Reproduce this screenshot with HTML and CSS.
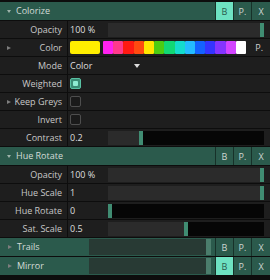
FILE: index.html
```html
<!DOCTYPE html>
<html>
<head>
<meta charset="utf-8">
<link rel="stylesheet" href="styles.css">
</head>
<body>
<div class="panel">
  <div class="hdr">
    <span class="tri-down"></span><span class="title">Colorize</span>
    <div class="btns"><span class="btn on">B</span><span class="btn">P.</span><span class="btn">X</span></div>
  </div>
  <div class="row">
    <div class="lbl">Opacity</div>
    <div class="val"><span class="num">100 %</span>
      <div class="slider"><div class="fill" style="flex-basis:100%"></div><div class="knob"></div><div class="rest"></div></div></div>
  </div>
  <div class="row">
    <div class="lbl"><span class="tri-right"></span>Color</div>
    <div class="val">
      <span class="swatch"></span>
      <div class="palette">
        <span style="background:#ff22f0"></span><span style="background:#ff3a8c"></span><span style="background:#ff1a12"></span><span style="background:#ff4a10"></span><span style="background:#ffe600"></span><span style="background:#4ccc12"></span><span style="background:#12d874"></span><span style="background:#14dccc"></span><span style="background:#24bcff"></span><span style="background:#1462ff"></span><span style="background:#3434ff"></span><span style="background:#8434ff"></span><span style="background:#d244ff"></span><span style="background:#ffffff"></span>
      </div>
      <span class="pbtn">P.</span>
    </div>
  </div>
  <div class="row">
    <div class="lbl">Mode</div>
    <div class="val"><div class="dropdown"><span>Color</span><span class="tri-dd"></span></div></div>
  </div>
  <div class="row">
    <div class="lbl">Weighted</div>
    <div class="val"><span class="check on"><span class="dot"></span></span></div>
  </div>
  <div class="row">
    <div class="lbl"><span class="tri-right"></span>Keep Greys</div>
    <div class="val"><span class="check"></span></div>
  </div>
  <div class="row">
    <div class="lbl">Invert</div>
    <div class="val"><span class="check"></span></div>
  </div>
  <div class="row">
    <div class="lbl">Contrast</div>
    <div class="val"><span class="num">0.2</span>
      <div class="slider"><div class="fill" style="flex-basis:20%"></div><div class="knob"></div><div class="rest"></div></div></div>
  </div>
  <div class="hdr">
    <span class="tri-down"></span><span class="title">Hue Rotate</span>
    <div class="btns"><span class="btn">B</span><span class="btn">P.</span><span class="btn">X</span></div>
  </div>
  <div class="row">
    <div class="lbl">Opacity</div>
    <div class="val"><span class="num">100 %</span>
      <div class="slider"><div class="fill" style="flex-basis:100%"></div><div class="knob"></div><div class="rest"></div></div></div>
  </div>
  <div class="row">
    <div class="lbl">Hue Scale</div>
    <div class="val"><span class="num">1</span>
      <div class="slider"><div class="fill" style="flex-basis:100%"></div><div class="knob"></div><div class="rest"></div></div></div>
  </div>
  <div class="row">
    <div class="lbl">Hue Rotate</div>
    <div class="val"><span class="num">0</span>
      <div class="slider"><div class="fill" style="flex-basis:0%"></div><div class="knob"></div><div class="rest"></div></div></div>
  </div>
  <div class="row">
    <div class="lbl">Sat. Scale</div>
    <div class="val"><span class="num">0.5</span>
      <div class="slider"><div class="fill" style="flex-basis:49%"></div><div class="knob"></div><div class="rest"></div></div></div>
  </div>
  <div class="hdr">
    <span class="tri-right hdr-tri"></span><span class="title short">Trails</span>
    <div class="hslider"><div class="hfill"></div><div class="hknob"></div></div>
    <div class="btns"><span class="btn">B</span><span class="btn">P.</span><span class="btn">X</span></div>
  </div>
  <div class="hdr">
    <span class="tri-right hdr-tri"></span><span class="title short">Mirror</span>
    <div class="hslider"><div class="hfill"></div><div class="hknob"></div></div>
    <div class="btns"><span class="btn on">B</span><span class="btn">P.</span><span class="btn">X</span></div>
  </div>
</div>
</body>
</html>
```

FILE: styles.css
```css
html, body {
  margin: 0;
  padding: 0;
  background: #171717;
}
body {
  font-family: "Open Sans", "Noto Sans", sans-serif;
  font-size: 9px;
  color: #c8c8c8;
}
.panel {
  width: 270px;
  padding-top: 2px;
  display: flex;
  flex-direction: column;
  gap: 1px;
  background: #0d0d0d;
  padding-bottom: 5px;
}
.hdr {
  height: 18px;
  display: flex;
  align-items: center;
  background: #2b5a4c;
  color: #d4dcd8;
}
.tri-down {
  width: 0;
  height: 0;
  margin-left: 7px;
  border-left: 2.5px solid transparent;
  border-right: 2.5px solid transparent;
  border-top: 3px solid #9fb3ab;
}
.title {
  margin-left: 5px;
  line-height: 18px;
}
.title.short {
  width: 70px;
}
.hdr-tri {
  margin-left: 8px;
  border-left-color: #8fa59c;
}
.btns {
  margin-left: auto;
  display: flex;
  align-self: stretch;
  gap: 1px;
  padding-left: 1px;
  background: #173129;
}
.btn {
  width: 17px;
  display: flex;
  align-items: center;
  justify-content: center;
  background: #2b5a4c;
  color: #cfd6d3;
  font-size: 9px;
}
.btn:last-child {
  width: 18px;
}
.btn.on {
  background: #6ee2c2;
  color: #2a5a4c;
}
.hslider {
  width: 122px;
  height: 16px;
  display: flex;
  margin-left: 2px;
  margin-right: 3px;
}
.hfill {
  flex: 1;
  background: #28392f;
  background: #283a34;
}
.hknob {
  width: 5px;
  background: #4b7d6c;
}
.row {
  height: 17px;
  display: flex;
  background: #1e1e1e;
}
.lbl {
  width: 67px;
  border-right: 1px solid #0d0d0d;
  display: flex;
  align-items: center;
  justify-content: flex-end;
  padding-right: 5px;
  box-sizing: border-box;
  width: 68px;
  line-height: 17px;
  position: relative;
}
.tri-right {
  width: 0;
  height: 0;
  border-top: 2.5px solid transparent;
  border-bottom: 2.5px solid transparent;
  border-left: 4px solid #7d7d7d;
}
.lbl .tri-right {
  margin-right: auto;
  margin-left: 7px;
}
.val {
  flex: 1;
  display: flex;
  align-items: center;
  padding-left: 2px;
  padding-right: 6px;
  color: #dedede;
}
.num {
  width: 38px;
  line-height: 17px;
}
.slider {
  flex: 1;
  height: 14px;
  display: flex;
}
.fill {
  flex-grow: 0;
  flex-shrink: 1;
  background: #2b2b2b;
}
.knob {
  flex: none;
  width: 4px;
  background: #408c72;
}
.rest {
  flex: 1 1 0;
  background: #060606;
}
.swatch {
  width: 30px;
  height: 13px;
  border-radius: 2px;
  background: #ffee00;
  margin-right: 3px;
}
.palette {
  width: 143px;
  height: 13px;
  display: flex;
}
.palette span {
  flex: 1;
  border-radius: 1px;
}
.pbtn {
  margin-left: auto;
  margin-right: 1px;
  color: #cfcfcf;
}
.dropdown {
  width: 70px;
  display: flex;
  align-items: center;
}
.tri-dd {
  margin-left: auto;
  width: 0;
  height: 0;
  border-left: 3px solid transparent;
  border-right: 3px solid transparent;
  border-top: 4px solid #dcdcdc;
}
.check {
  width: 9px;
  height: 9px;
  border: 1px solid #4e4e4e;
  border-radius: 2px;
  background: #1a1a1a;
  display: flex;
  align-items: center;
  justify-content: center;
}
.check.on {
  border-color: #59c2a4;
  background: #3a8c75;
}
.dot {
  width: 5px;
  height: 5px;
  border-radius: 1px;
  background: #8eecd2;
}
```
